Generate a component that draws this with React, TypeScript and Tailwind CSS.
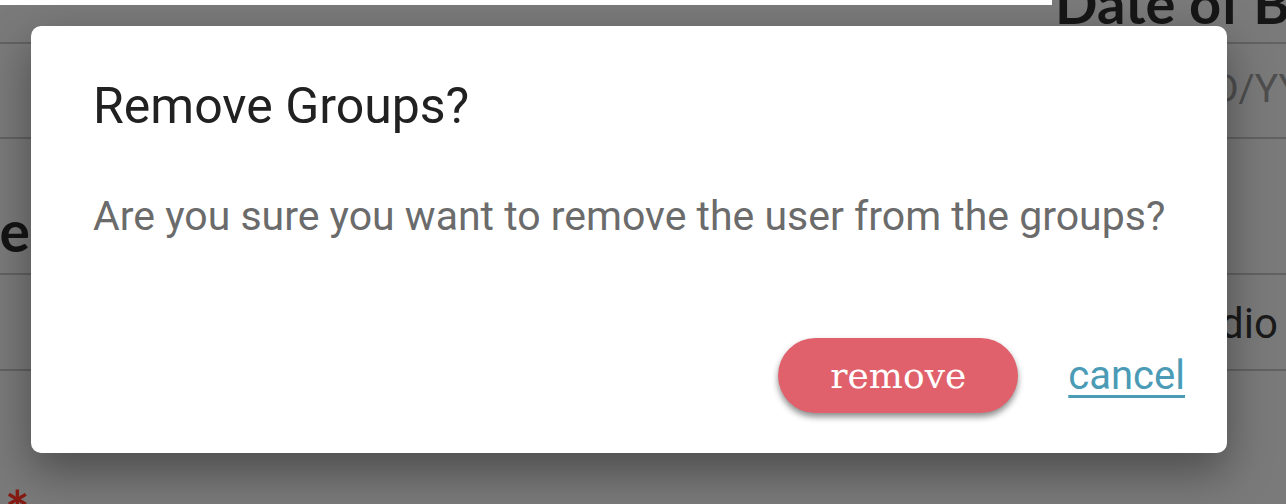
// Confirm dialog over a dimmed form page
const lines = [42, 137, 273, 369];

const Backdrop = () => (
  <div className="absolute inset-0 overflow-hidden bg-[#7a7a7a]">
    <div className="absolute left-0 top-0 h-[5px] w-[1052px] bg-white" />
    {lines.map((y) => (
      <div key={y} className="absolute left-0 h-[2px] w-full bg-[#626262]" style={{ top: y }} />
    ))}
    <span className="absolute left-[1055px] top-[-27px] whitespace-nowrap font-['Lato'] text-[56px] font-bold leading-[60px] text-[#161616]">
      Date of Birth
    </span>
    <span className="absolute left-[1213px] top-[66px] whitespace-nowrap font-['Roboto'] text-[39px] leading-[46px] text-[#4e4e4e]">
      D/YYYY
    </span>
    <span className="absolute right-[1256px] top-[198px] whitespace-nowrap font-['Lato'] text-[57px] font-bold leading-[64px] text-[#141414]">
      Name
    </span>
    <span className="absolute left-[1220px] top-[299px] whitespace-nowrap font-['Roboto'] text-[42px] leading-[50px] text-[#1a1a1a]">
      dio
    </span>
    <span className="absolute left-[5px] top-[481px] font-['Lato'] text-[58px] font-bold leading-[60px] text-[#861b12]">
      *
    </span>
  </div>
);

export default function App() {
  return (
    <div className="relative h-[504px] w-[1286px] overflow-hidden font-['Roboto',sans-serif]">
      <Backdrop />

      {/* modal */}
      <div className="absolute left-[31px] top-[26px] flex h-[427px] w-[1196px] flex-col rounded-[10px] bg-white pl-[62px] pr-[42px] pt-[51px] shadow-[0_18px_45px_rgba(0,0,0,0.38)]">
        <h2 className="text-[50px] leading-[58px] text-[#212121]">Remove Groups?</h2>
        <p className="mt-[57px] text-[41px] leading-[48px] text-[#6b6b6b]">
          Are you sure you want to remove the user from the groups?
        </p>
        <div className="mt-[98px] flex items-center justify-end gap-[50px]">
          <button className="flex h-[75px] w-[240px] items-center justify-center rounded-full bg-[#e0616b] font-['DejaVu_Serif',serif] text-[36px] text-white shadow-[0_4px_6px_rgba(0,0,0,0.45)]">
            remove
          </button>
          <a href="#" className="text-[40px] text-[#4b9bb6] underline decoration-[3px] underline-offset-[6px]">
            cancel
          </a>
        </div>
      </div>
    </div>
  );
}
